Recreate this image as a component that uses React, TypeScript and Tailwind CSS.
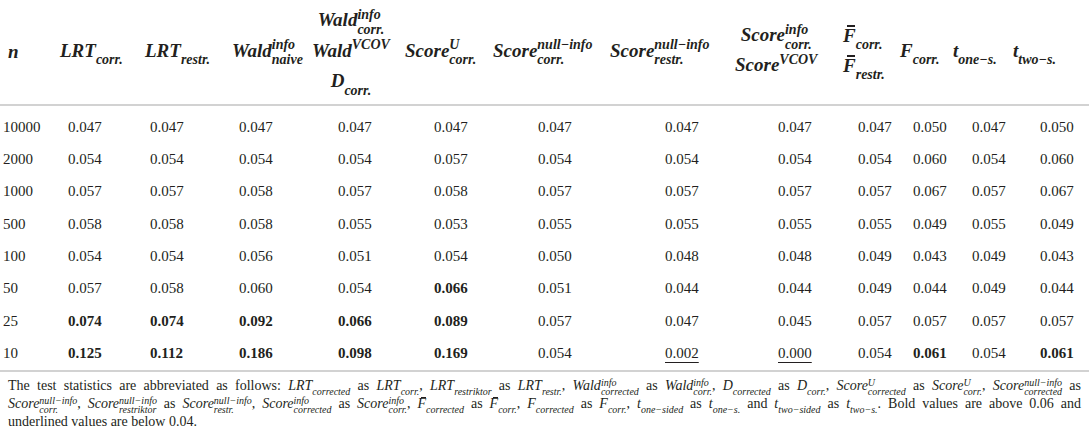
import React from 'react';

type Val = { v: string; b?: boolean; u?: boolean };

const cols = 'grid grid-cols-[60px_85px_87px_78px_95px_88px_117px_123px_110px_57px_53px_60px_76px]';

// left offset of the numbers inside each column
const dataPad = [
  'pl-[3px]', 'pl-[8px]', 'pl-[5px]', 'pl-[7px]', 'pl-[28px]', 'pl-[29px]', 'pl-[45px]',
  'pl-[55px]', 'pl-[45px]', 'pl-[15px]', 'pl-[13px]', 'pl-[19px]', 'pl-[27px]',
];

const raw: string[] = [
  '10000 0.047 0.047 0.047 0.047 0.047 0.047 0.047 0.047 0.047 0.050 0.047 0.050',
  '2000 0.054 0.054 0.054 0.054 0.057 0.054 0.054 0.054 0.054 0.060 0.054 0.060',
  '1000 0.057 0.057 0.058 0.057 0.058 0.057 0.057 0.057 0.057 0.067 0.057 0.067',
  '500 0.058 0.058 0.058 0.055 0.053 0.055 0.055 0.055 0.055 0.049 0.055 0.049',
  '100 0.054 0.054 0.056 0.051 0.054 0.050 0.048 0.048 0.049 0.043 0.049 0.043',
  '50 0.057 0.058 0.060 0.054 *0.066 0.051 0.044 0.044 0.049 0.044 0.049 0.044',
  '25 *0.074 *0.074 *0.092 *0.066 *0.089 0.057 0.047 0.045 0.057 0.057 0.057 0.057',
  '10 *0.125 *0.112 *0.186 *0.098 *0.169 0.054 _0.002 _0.000 0.054 *0.061 0.054 *0.061',
];

const rows: Val[][] = raw.map((r) =>
  r.split(' ').map((s) => {
    if (s.startsWith('*')) return { v: s.slice(1), b: true };
    if (s.startsWith('_')) return { v: s.slice(1), u: true };
    return { v: s };
  })
);

const Scripts = ({ sup, sub, small }: { sup?: string; sub?: string; small?: boolean }) => (
  <span
    className={`inline-flex flex-col align-middle ${
      small ? 'text-[10px] leading-[9px]' : 'text-[14px] leading-[15px]'
    }`}
  >
    <span>{sup || '\u00a0'}</span>
    <span>{sub || '\u00a0'}</span>
  </span>
);

// F with a bar over it
const BarF = () => (
  <span className="relative inline-block leading-none">
    F
    <span className="absolute left-[0.22em] right-[0.02em] top-[-0.02em] h-[0.08em] bg-current" />
  </span>
);

// a symbol with optional super- and subscript stacked after it
const Sym = ({ b, sup, sub, small, bar }: { b: string; sup?: string; sub?: string; small?: boolean; bar?: boolean }) => (
  <span className="whitespace-nowrap italic">
    {bar ? <BarF /> : b}
    <Scripts sup={sup} sub={sub} small={small} />
  </span>
);

const Header = () => (
  <div className={`${cols} h-[106px] items-center border-b-2 border-[#d2d2d2] text-[19px] font-bold italic`}>
    <div className="pl-[8px]">n</div>
    <div><Sym b="LRT" sub="corr." /></div>
    <div><Sym b="LRT" sub="restr." /></div>
    <div><Sym b="Wald" sup="info" sub="naive" /></div>
    <div className="pl-[2px]">
      <div className="inline-flex flex-col items-center leading-[27px]">
        <Sym b="Wald" sup="info" sub="corr." />
        <Sym b="Wald" sup="VCOV" />
        <Sym b="D" sub="corr." />
      </div>
    </div>
    <div><Sym b="Score" sup="U" sub="corr." /></div>
    <div><Sym b="Score" sup="null−info" sub="corr." /></div>
    <div><Sym b="Score" sup="null−info" sub="restr." /></div>
    <div className="pl-[2px]">
      <div className="inline-flex flex-col items-center leading-[25px]">
        <Sym b="Score" sup="info" sub="corr." />
        <Sym b="Score" sup="VCOV" />
      </div>
    </div>
    <div>
      <div className="inline-flex flex-col items-start leading-[22px]">
        <Sym b="F" bar sub="corr." />
        <Sym b="F" bar sub="restr." />
      </div>
    </div>
    <div><Sym b="F" sub="corr." /></div>
    <div><Sym b="t" sub="one−s." /></div>
    <div><Sym b="t" sub="two−s." /></div>
  </div>
);

const Body = () => (
  <div className="border-b-2 border-[#d2d2d2] pt-[5px] pb-[1px] text-[15px]">
    {rows.map((row, i) => (
      <div key={i} className={`${cols} h-[32.3px] items-center`}>
        {row.map((c, j) => (
          <div key={j} className={dataPad[j]}>
            <span className={`${c.b ? 'font-bold' : ''} ${c.u ? 'underline underline-offset-4 decoration-1' : ''}`}>
              {c.v}
            </span>
          </div>
        ))}
      </div>
    ))}
  </div>
);

const S = (p: { b: string; sup?: string; sub?: string; bar?: boolean }) => <Sym {...p} small />;

const line = 'h-[18px] whitespace-nowrap';

const Footnote = () => (
  <div className="px-[8px] pt-[5px] text-[14px] leading-[18px]">
    <div className={`${line} text-justify [text-align-last:justify]`}>
      The test statistics are abbreviated as follows: <S b="LRT" sub="corrected" /> as <S b="LRT" sub="corr." />,{' '}
      <S b="LRT" sub="restriktor" /> as <S b="LRT" sub="restr." />, <S b="Wald" sup="info" sub="corrected" /> as{' '}
      <S b="Wald" sup="info" sub="corr." />, <S b="D" sub="corrected" /> as <S b="D" sub="corr." />,{' '}
      <S b="Score" sup="U" sub="corrected" /> as <S b="Score" sup="U" sub="corr." />,{' '}
      <S b="Score" sup="null−info" sub="corrected" /> as
    </div>
    <div className={`${line} text-justify [text-align-last:justify]`}>
      <S b="Score" sup="null−info" sub="corr." />, <S b="Score" sup="null−info" sub="restriktor" /> as{' '}
      <S b="Score" sup="null−info" sub="restr." />, <S b="Score" sup="info" sub="corrected" /> as{' '}
      <S b="Score" sup="info" sub="corr." />, <S b="F" bar sub="corrected" /> as <S b="F" bar sub="corr." />,{' '}
      <S b="F" sub="corrected" /> as <S b="F" sub="corr." />, <S b="t" sub="one−sided" /> as{' '}
      <S b="t" sub="one−s." /> and <S b="t" sub="two−sided" /> as <S b="t" sub="two−s." />. Bold values are above
      0.06 and
    </div>
    <div className={line}>underlined values are below 0.04.</div>
  </div>
);

export default function App() {
  return (
    <div className="h-[433px] w-[1089px] overflow-hidden bg-white [font-family:'Liberation_Serif','Times_New_Roman',serif] text-[#231f20]">
      <Header />
      <Body />
      <Footnote />
    </div>
  );
}
